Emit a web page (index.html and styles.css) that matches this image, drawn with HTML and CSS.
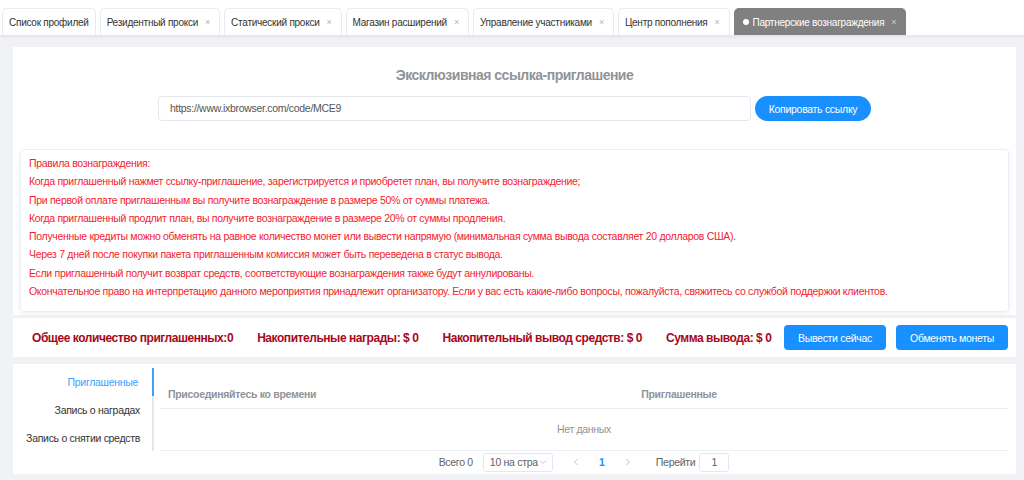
FILE: index.html
```html
<!DOCTYPE html>
<html lang="ru">

<head>
    <meta charset="UTF-8" />
    <meta name="viewport" content="width=device-width, initial-scale=1.0" />
    <title>Партнерские вознаграждения</title>
    <link rel="stylesheet" href="styles.css">
</head>

<body>
    <header class="tabs">
        <div class="tab">Список профилей</div>
        <div class="tab">Резидентный прокси <span class="close">×</span></div>
        <div class="tab">Статический прокси <span class="close">×</span></div>
        <div class="tab">Магазин расширений <span class="close">×</span></div>
        <div class="tab">Управление участниками <span class="close">×</span></div>
        <div class="tab">Центр пополнения <span class="close">×</span></div>
        <div class="tab active"><span class="dot"></span>Партнерские вознаграждения <span class="close">×</span></div>
    </header>

    <main class="page">
        <!-- invite link + rules -->
        <section class="card invite">
            <h2 class="invite-title">Эксклюзивная ссылка-приглашение</h2>
            <div class="invite-row">
                <div class="link-input">https://www.ixbrowser.com/code/MCE9</div>
                <button class="btn btn-round">Копировать ссылку</button>
            </div>
            <div class="rules">
                <p>Правила вознаграждения:</p>
                <p>Когда приглашенный нажмет ссылку-приглашение, зарегистрируется и приобретет план, вы получите вознаграждение;</p>
                <p>При первой оплате приглашенным вы получите вознаграждение в размере 50% от суммы платежа.</p>
                <p>Когда приглашенный продлит план, вы получите вознаграждение в размере 20% от суммы продления.</p>
                <p>Полученные кредиты можно обменять на равное количество монет или вывести напрямую (минимальная сумма вывода составляет 20 долларов США).</p>
                <p>Через 7 дней после покупки пакета приглашенным комиссия может быть переведена в статус вывода.</p>
                <p>Если приглашенный получит возврат средств, соответствующие вознаграждения также будут аннулированы.</p>
                <p>Окончательное право на интерпретацию данного мероприятия принадлежит организатору. Если у вас есть какие-либо вопросы, пожалуйста, свяжитесь со службой поддержки клиентов.</p>
            </div>
        </section>

        <!-- totals -->
        <section class="stats">
            <span class="stat">Общее количество приглашенных:0</span>
            <span class="stat">Накопительные награды: $ 0</span>
            <span class="stat">Накопительный вывод средств: $ 0</span>
            <span class="stat">Сумма вывода: $ 0</span>
            <div class="stats-actions">
                <button class="btn btn-withdraw">Вывести сейчас</button>
                <button class="btn btn-exchange">Обменять монеты</button>
            </div>
        </section>

        <!-- records -->
        <section class="records">
            <ul class="side-nav">
                <li class="active">Приглашенные</li>
                <li>Запись о наградах</li>
                <li>Запись о снятии средств</li>
            </ul>
            <div class="table-wrap">
                <div class="table-head">
                    <div class="col-time">Присоединяйтесь ко времени</div>
                    <div class="col-user">Приглашенные</div>
                </div>
                <div class="table-empty">Нет данных</div>
                <div class="pager">
                    <span class="total">Всего 0</span>
                    <div class="size-select">
                        <span class="size-text">10 на стра</span>
                        <svg width="8" height="8" viewBox="0 0 8 8"><path d="M1 2.5 L4 5.5 L7 2.5" fill="none" stroke="#c0c4cc" stroke-width="1"/></svg>
                    </div>
                    <span class="pg-btn">
                        <svg width="8" height="8" viewBox="0 0 8 8"><path d="M5.5 1 L2.5 4 L5.5 7" fill="none" stroke="#c0c4cc" stroke-width="1"/></svg>
                    </span>
                    <span class="pg-btn current">1</span>
                    <span class="pg-btn">
                        <svg width="8" height="8" viewBox="0 0 8 8"><path d="M2.5 1 L5.5 4 L2.5 7" fill="none" stroke="#c0c4cc" stroke-width="1"/></svg>
                    </span>
                    <span class="jump">Перейти</span>
                    <div class="jump-input">1</div>
                </div>
            </div>
        </section>
    </main>
</body>

</html>
```

FILE: styles.css
```css
* {
    margin: 0;
    padding: 0;
    box-sizing: border-box;
}

body {
    font-family: 'Liberation Sans', Arial, sans-serif;
    background-color: #f0f2f5;
    color: #333;
    height: 480px;
    overflow: hidden;
}

/* Tabs */
.tabs {
    display: flex;
    align-items: flex-end;
    gap: 4px;
    height: 36px;
    padding: 0 2px;
    background-color: #fff;
    border-bottom: 1px solid #e4e7ed;
    box-shadow: 0 1px 3px rgba(0, 0, 0, 0.06);
}

.tab {
    display: flex;
    align-items: center;
    height: 27px;
    padding: 0 6px;
    font-size: 10px;
    letter-spacing: -0.25px;
    color: #333;
    border: 1px solid #e8eaef;
    border-bottom: none;
    border-radius: 5px 5px 0 0;
    white-space: nowrap;
}

.tab .close {
    margin-left: 7px;
    margin-right: 3px;
    font-size: 9px;
    color: #b0b3b8;
}

.tab.active {
    background-color: #808080;
    border-color: #808080;
    color: #fff;
    padding-left: 8px;
}

.tab.active .close {
    color: #d0d0d0;
}

.dot {
    width: 6px;
    height: 6px;
    border-radius: 50%;
    background-color: #fff;
    margin-right: 4px;
}

.page {
    padding: 11px 8px 0 13px;
}

.card {
    background-color: #fff;
}

/* Invite link */
.invite {
    padding: 18px 7px 3px 7px;
}

.invite-title {
    text-align: center;
    font-size: 14px;
    line-height: 20px;
    letter-spacing: -0.5px;
    font-weight: bold;
    color: #909399;
}

.invite-row {
    display: flex;
    justify-content: center;
    gap: 4px;
    margin-top: 11px;
}

.link-input {
    width: 593px;
    height: 25px;
    line-height: 23px;
    padding: 0 11px;
    font-size: 10.5px;
    letter-spacing: -0.3px;
    color: #555;
    border: 1px solid #e4e7ed;
    border-radius: 4px;
}

.btn {
    border: none;
    font-family: inherit;
    font-size: 10.5px;
    letter-spacing: -0.3px;
    color: #fff;
    background-color: #1890ff;
    border-radius: 4px;
    cursor: pointer;
}

.btn-round {
    width: 116px;
    height: 25px;
    border-radius: 13px;
}

.rules {
    margin-top: 28px;
    padding: 4px 8px 11px;
    border: 1px solid #ebeef5;
    border-radius: 4px;
    box-shadow: 0 2px 6px rgba(0, 0, 0, 0.06);
}

.rules p {
    font-size: 10.5px;
    letter-spacing: -0.3px;
    line-height: 18.3px;
    color: #f5222d;
}

/* Totals */
.stats {
    display: flex;
    align-items: center;
    height: 39px;
    margin-top: 3px;
    padding: 0 8px 0 19px;
    background-color: #fff;
}

.stat {
    font-size: 12px;
    letter-spacing: -0.45px;
    font-weight: bold;
    color: #a8071a;
    margin-right: 24px;
    white-space: nowrap;
}

.stat:last-of-type {
    margin-right: 0;
}

.stats-actions {
    display: flex;
    gap: 10px;
    margin-left: auto;
}

.btn-withdraw {
    width: 102px;
    height: 25px;
}

.btn-exchange {
    width: 112px;
    height: 25px;
}

/* Records */
.records {
    display: flex;
    height: 110px;
    margin-top: 7px;
    padding: 4px 8px 0 0;
    background-color: #fff;
}

.side-nav {
    list-style: none;
    width: 141px;
    height: 83px;
    border-right: 2px solid #e4e7ed;
}

.side-nav li {
    height: 28px;
    line-height: 28px;
    padding-right: 12px;
    text-align: right;
    font-size: 10.5px;
    letter-spacing: -0.3px;
    color: #333;
    white-space: nowrap;
}

.side-nav li.active {
    color: #409eff;
    margin-right: -2px;
    padding-right: 14px;
    border-right: 2px solid #409eff;
}

.table-wrap {
    flex: 1;
    margin-left: 6px;
}

.table-head {
    display: flex;
    height: 41px;
    padding-top: 19px;
    font-size: 10.5px;
    letter-spacing: -0.3px;
    line-height: 14px;
    font-weight: bold;
    color: #909399;
    border-bottom: 1px solid #ebeef5;
}

.col-time {
    width: 190px;
    padding-left: 8px;
}

.col-user {
    flex: 1;
    text-align: center;
}

.table-empty {
    height: 42px;
    line-height: 41px;
    text-align: center;
    font-size: 10.5px;
    letter-spacing: -0.3px;
    color: #909399;
    border-bottom: 1px solid #ebeef5;
}

.pager {
    display: flex;
    align-items: center;
    justify-content: center;
    height: 22px;
    font-size: 10.5px;
    letter-spacing: -0.3px;
    color: #606266;
}

.total {
    margin-right: 10px;
}

.size-select {
    display: flex;
    align-items: center;
    justify-content: space-between;
    width: 70px;
    height: 19px;
    padding: 0 5px 0 6px;
    border: 1px solid #e4e7ed;
    border-radius: 3px;
    margin-right: 10px;
}

.size-text {
    white-space: nowrap;
}

.pg-btn {
    display: flex;
    align-items: center;
    justify-content: center;
    width: 26px;
    height: 19px;
}

.pg-btn.current {
    color: #1890ff;
    font-weight: bold;
}

.jump {
    margin-left: 15px;
    margin-right: 4px;
}

.jump-input {
    width: 30px;
    height: 19px;
    line-height: 17px;
    text-align: center;
    border: 1px solid #e4e7ed;
    border-radius: 3px;
}
```
